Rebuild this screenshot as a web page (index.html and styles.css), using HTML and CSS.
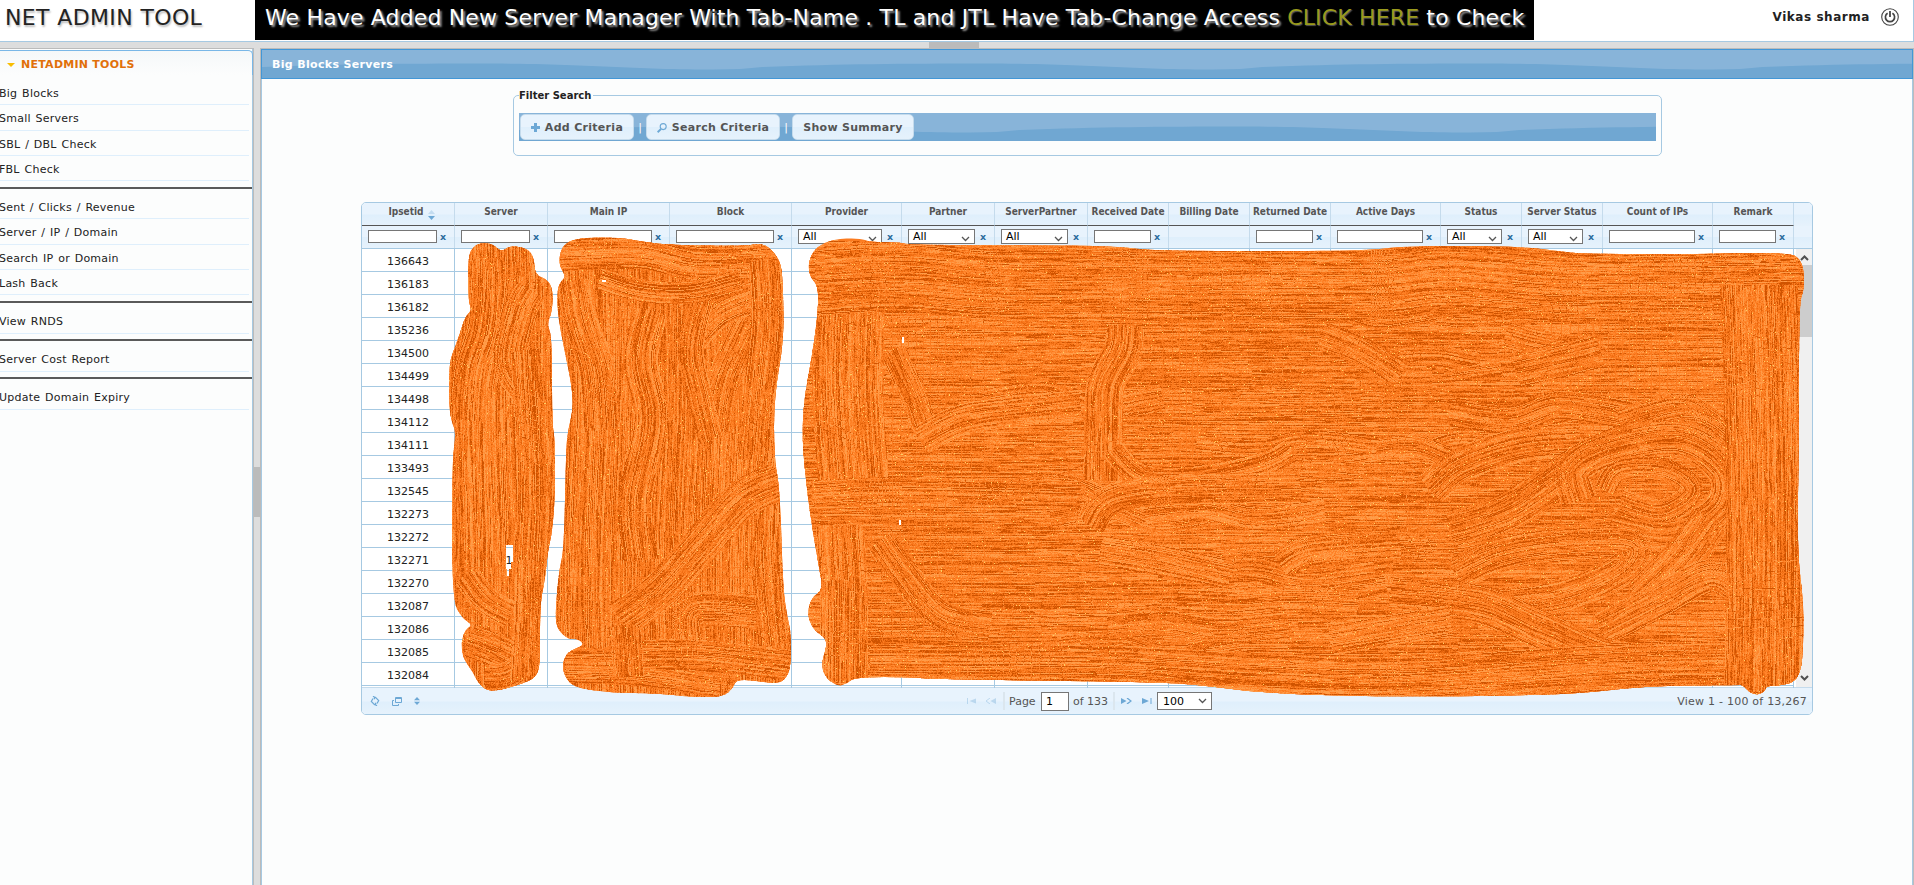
FILE: index.html
```html
<!DOCTYPE html>
<html lang="en">
<head>
<meta charset="utf-8">
<title>Net Admin Tool</title>
<link rel="stylesheet" href="styles.css">
</head>
<body>
<header class="top">
  <h1 class="brand">NET ADMIN TOOL</h1>
  <div class="notice"><span class="notice-text">We Have Added New Server Manager With Tab-Name . TL and JTL Have Tab-Change Access <a class="here">CLICK HERE</a> to Check</span></div>
  <div class="user"><span class="user-name">Vikas sharma</span>
    <svg class="power" width="18" height="18" viewBox="0 0 18 18" fill="none" stroke="#444"><circle cx="9" cy="9" r="8.3" stroke-width="1.1"/><path d="M6.6 5.2a4.6 4.6 0 1 0 4.8 0" stroke-width="1.7"/><path d="M9 3v6" stroke-width="1.8"/></svg>
  </div>
</header>
<div class="bar-h"><div class="grip-h"></div></div>
<div class="body">
  <nav class="side">
    <div class="side-head"><span class="tri"></span><span>NETADMIN TOOLS</span></div>
    <div class="menu" id="menu"></div>
  </nav>
  <div class="bar-v"><div class="grip-v"></div></div>
  <main class="main">
    <div class="title"><svg class="wave" width="100%" height="100%"><defs><pattern id="w" width="500" height="28" patternUnits="userSpaceOnUse"><path d="M0 17C80 14 140 13.500 220 13.500C330 13.500 360 19.500 450 19.500Q480 19.500 500 17V28H0Z" fill="#70a7d2"/></pattern></defs><rect width="100%" height="100%" fill="url(#w)"/></svg><span class="title-text">Big Blocks Servers</span></div>
    <fieldset class="filter">
      <legend>Filter Search</legend>
      <div class="tools">
        <svg class="wave" width="100%" height="100%"><rect width="100%" height="100%" fill="url(#w)"/></svg>
        <button class="btn add"><svg width="9" height="9" viewBox="0 0 9 9"><path d="M3 0h3v3h3v3H6v3H3V6H0V3h3z" fill="#6da8d5"/></svg><span>Add Criteria</span></button>
        <span class="sep">|</span>
        <button class="btn find"><svg width="10" height="10" viewBox="0 0 10 10" fill="none" stroke="#6da8d5"><circle cx="6.200" cy="3.600" r="3" stroke-width="1.100"/><path d="M4 6L.6 9.200" stroke-width="1.900"/></svg><span>Search Criteria</span></button>
        <span class="sep">|</span>
        <button class="btn sum"><span>Show Summary</span></button>
      </div>
    </fieldset>
    <section class="grid">
      <div class="grid-head" id="head"></div>
      <div class="grid-filter" id="filters"></div>
      <div class="grid-body">
        <div class="rows" id="rows"></div>
        <div class="scroll">
          <svg class="arrow" width="9" height="6" viewBox="0 0 9 6"><path d="M1 5l3.500-3.500L8 5" fill="none" stroke="#505050" stroke-width="2"/></svg>
          <div class="thumb"></div>
          <svg class="arrow down" width="9" height="6" viewBox="0 0 9 6"><path d="M1 1l3.500 3.500L8 1" fill="none" stroke="#505050" stroke-width="2"/></svg>
        </div>
      </div>
      <footer class="pager">
        <div class="acts">
          <svg width="10" height="10" viewBox="0 0 10 10" fill="none" stroke="#6da8d5" stroke-width="1.200"><path d="M4 1.300H5.500L8.700 4.500 7 7.500M6 8.700H4.500L1.300 5.500 3 2.500M3 .2L5 1.500 4 3.200M7 9.800L5 8.500 6 6.800"/></svg>
          <svg width="10" height="9" viewBox="0 0 10 9" fill="none" stroke="#6da8d5"><path d="M3.500 .5h6v5h-6zM3.500 1.500h6M2 3.500H.5v5h6V7"/></svg>
          <svg width="6" height="8" viewBox="0 0 6 8" fill="#6da8d5"><path d="M3 0l3 3.200H0zM3 8l3-3.200H0z"/></svg>
        </div>
        <div class="nav">
          <svg class="off" width="10" height="6" viewBox="0 0 10 6" fill="#6da8d5"><path d="M0 0h1v6H0zM9 .5v5L2.500 3z"/></svg>
          <svg class="off prev" width="11" height="6" viewBox="0 0 11 6" fill="#6da8d5"><path d="M11 0v6L5.500 3z"/><path d="M5 0L1 3l4 3" fill="none" stroke="#6da8d5"/></svg>
          <i class="div"></i><span class="pg">Page</span><span class="pbox">1</span><span class="of">of 133</span><i class="div"></i>
          <svg class="next" width="11" height="6" viewBox="0 0 11 6" fill="#6da8d5"><path d="M0 0v6l5.500-3z"/><path d="M6 0l4 3-4 3" fill="none" stroke="#6da8d5" stroke-width="1.300"/></svg>
          <svg class="last" width="10" height="6" viewBox="0 0 10 6" fill="#6da8d5"><path d="M8.500 0h1v6h-1zM0 0v6l7-3z"/></svg>
          <span class="sel size">100<svg width="9" height="6" viewBox="0 0 9 6"><path d="M1 1l3.500 3.500L8 1" fill="none" stroke="#555" stroke-width="1.300"/></svg></span>
        </div>
        <div class="view">View 1 - 100 of 13,267</div>
      </footer>
    </section>
  </main>
</div>
<canvas class="paint" id="paint" width="1372" height="470"></canvas>
<script src="app.js"></script>
</body>
</html>
```
FILE: styles.css
```css
* { box-sizing: border-box; }
body { margin: 0; width: 1914px; height: 885px; overflow: hidden; background: #ddd; color: #222; font-family: Verdana, "DejaVu Sans", sans-serif; font-size: 11px; position: relative; }
.top { height: 42px; background: #fff; border-bottom: 1px solid #a6c9e2; border-right: 1px solid #a6c9e2; display: flex; }
.brand { margin: 0; width: 255px; padding: 2px 0 0 5px; font-size: 22px; font-weight: 400; line-height: 32px; letter-spacing: .37px; white-space: nowrap; text-shadow: 1px 2px 2px #bbb; }
.notice { width: 1279px; height: 40px; background: #000; color: #fff; padding: 2px 0 0 10px; font-size: 22px; line-height: 32px; letter-spacing: .15px; white-space: nowrap; text-shadow: 2px 2px 2px #999; }
.here { color: #9a9a1c; text-shadow: 1px 1px 1px #555; }
.user { flex: 1; display: flex; align-items: center; justify-content: flex-end; height: 33px; padding-right: 14px; gap: 11px; }
.user-name { font-weight: 700; font-size: 12px; letter-spacing: .55px; }
.bar-h { height: 6px; display: flex; justify-content: center; }
.grip-h { width: 50px; margin-right: 6px; background: #bbb; }
.body { display: flex; height: 837px; }
.side { width: 254px; background: #fcfdfd; border-top: 1px solid #bbb; border-right: 1px solid #bbb; padding: 1px 0 0; box-shadow: inset -1px 0 #a6c9e2; }
.side-head { height: 25px; width: 253px; border-top: 1px solid #79b7e7; border-right: 1px solid #79b7e7; border-top-right-radius: 5px; background: linear-gradient(#f5f8f9, #fcfdfd); display: flex; align-items: center; gap: 6px; padding: 3px 0 0 7px; color: #e17009; font-weight: 700; font-size: 11px; letter-spacing: .25px; }
.tri { border: 4px solid transparent; border-top-color: #f9bd01; border-bottom: 0; }
.menu { padding-top: 5px; }
.menu-item { height: 25.33px; width: 249px; border-bottom: 1px solid #dfeffc; text-indent: -1px; padding-top: 5px; white-space: nowrap; line-height: 17px; letter-spacing: .25px; word-spacing: 1px; }
.menu-rule { height: 2px; width: 252px; margin: 5.500px 0 5.300px; background: #5a5a5a; }
.bar-v { width: 6px; display: flex; align-items: center; }
.grip-v { width: 6px; height: 50px; background: #bbb; margin-top: 51px; }
.main { width: 1654px; background: #fcfdfd; border: 1px solid #bbb; border-bottom: 0; box-shadow: inset 1px 0 #a6c9e2, inset -1px 0 #a6c9e2; }
.title { height: 30px; background: #88b4d9; border: 1px solid #4297d7; position: relative; color: #fff; font-weight: 700; font-size: 11px; line-height: 29px; padding-left: 10px; letter-spacing: .33px; }
.wave { position: absolute; left: 0; top: 0; }
.title-text { position: relative; }
.filter { width: 1149px; height: 67px; margin: 10px 0 0 252px; padding: 0 5px; border: 1px solid #a6c9e2; border-radius: 5px; background: #fcfdfd; }
.filter legend { font-size: 10px; font-weight: 700; line-height: 13px; padding: 0 2px 0 0; }
.tools { height: 28px; margin-top: 11px; position: relative; background: #88b4d9; display: flex; align-items: center; padding-left: 1px; color: #fff; }
.btn { position: relative; height: 26px; border: 1px solid #c5dbec; border-radius: 5px; background: linear-gradient(#e8f3fd 50%, #dfeffc 50%, #e6f2fc); color: #555; font: 700 11px Verdana, "DejaVu Sans", sans-serif; letter-spacing: .3px; display: flex; align-items: center; justify-content: center; gap: 5px; padding: 1px 0 0; white-space: nowrap; }
.add { width: 114px; }
.find { width: 134px; }
.sum { width: 122px; }
.sep { width: 12px; text-align: center; position: relative; }
.grid { width: 1452px; height: 513px; margin: 46px 0 0 100px; border: 1px solid #a6c9e2; border-radius: 5px; overflow: hidden; background: #fff; }
.grid-head, .grid-filter { display: flex; background: linear-gradient(#e8f3fd 48%, #dfeffc 52%, #e6f2fc); }
.grid-head { height: 23px; font-family: "DejaVu Sans Condensed", "DejaVu Sans", sans-serif; font-stretch: condensed; color: #555; font-weight: 700; }
.th { border-right: 1px solid #c5dbec; border-bottom: 1px solid #555; text-align: center; line-height: 17px; font-size: 10px; white-space: nowrap; flex: none; position: relative; }
.th:first-child { padding-left: 7px; }
.sort { margin-left: 4px; vertical-align: -5px; }
.grid-filter { height: 23px; border-bottom: 1px solid #a6c9e2; }
.tf { border-right: 1px solid #c5dbec; padding: 4px 0 0 6px; flex: none; display: flex; align-items: flex-start; }
.inp { height: 13px; border: 1px solid #767676; background: #fff; flex: none; }
.sel { height: 15px; margin-top: -1px; border: 1px solid #767676; background: #fff; color: #000; flex: none; font-size: 11px; line-height: 13px; padding: 0 4px; display: flex; justify-content: space-between; align-items: center; }
.tf .sel svg { margin-top: 5px; }
.clr { color: #2e6e9e; font-weight: 700; font-size: 9.500px; line-height: 13px; margin-left: 3px; }
.sel + .clr { margin-left: 5px; }
.grid-body { display: flex; height: 439px; border-bottom: 1px solid #c5dbec; }
.rows { width: 1434px; overflow: hidden; height: 439px; flex: none; }
.row { display: flex; height: 23px; }
.td { border-right: 1px solid #a6c9e2; border-bottom: 1px solid #a6c9e2; flex: none; text-align: center; line-height: 25px; }
.scroll { width: 16px; background: #f0f0f0; display: flex; flex-direction: column; align-items: center; padding: 6px 0; }
.thumb { width: 15px; height: 72px; background: #cdcdcd; margin-top: 4px; }
.arrow.down { margin-top: auto; }
.pager { height: 26px; background: linear-gradient(#e8f3fd 50%, #dfeffc 54%, #e6f2fc); display: grid; grid-template-columns: 605px 1fr 300px; align-items: center; color: #555; }
.acts { display: flex; gap: 12px; padding-left: 8px; align-items: center; }
.nav { display: flex; align-items: center; }
.off { opacity: .35; }
.prev { margin-left: 8px; }
.div { width: 2px; height: 18px; background: #dbe6ee; margin: 0 4px 0 7px; }
.of + .div { margin: 0 6px 0 3px; }
.pg { width: 32px; }
.pbox { width: 28px; height: 19px; border: 1px solid #767676; background: #fff; color: #000; line-height: 17px; padding-left: 4px; }
.of { width: 37px; margin-left: 4px; white-space: nowrap; }
.last { margin: 0 5px 0 10px; }
.size { width: 55px; height: 18px; margin: 0; padding: 0 4px 0 5px; }
.view { text-align: right; padding-right: 5px; letter-spacing: .23px; }
.paint { position: absolute; left: 440px; top: 232px; pointer-events: none; }
```
FILE: app.js
```js
const $ = id => document.getElementById(id);

const groups = [
  ['Big Blocks', 'Small Servers', 'SBL / DBL Check', 'FBL Check'],
  ['Sent / Clicks / Revenue', 'Server / IP / Domain', 'Search IP or Domain', 'Lash Back'],
  ['View RNDS'], ['Server Cost Report'], ['Update Domain Expiry']
];
$('menu').innerHTML = groups
  .map(g => g.map(t => `<div class="menu-item">${t}</div>`).join(''))
  .join('<div class="menu-rule"></div>');

const cols = [
  ['Ipsetid', 93, 'i'], ['Server', 93, 'i'], ['Main IP', 122, 'i'], ['Block', 122, 'i'],
  ['Provider', 110, 's'], ['Partner', 93, 's'], ['ServerPartner', 93, 's'],
  ['Received Date', 81, 'i'], ['Billing Date', 81, ''], ['Returned Date', 81, 'i'],
  ['Active Days', 110, 'i'], ['Status', 81, 's'], ['Server Status', 81, 's'],
  ['Count of IPs', 110, 'i'], ['Remark', 81, 'i']
];
const sort = '<svg class="sort" width="7" height="10" viewBox="0 0 7 10"><path d="M0 4l3.500-4L7 4z" fill="#c3dcf0"/><path d="M0 6h7l-3.500 4z" fill="#6da8d5"/></svg>';
$('head').innerHTML = cols.map((c, i) => `<div class="th" style="width:${c[1]}px">${c[0]}${i ? '' : sort}</div>`).join('');
const chev = '<svg width="9" height="6" viewBox="0 0 9 6"><path d="M1 1l3.500 3.500L8 1" fill="none" stroke="#555" stroke-width="1.300"/></svg>';
$('filters').innerHTML = cols.map(c => {
  const box = c[2] === 'i' ? `<span class="inp" style="width:${c[1] - 24}px"></span>`
    : c[2] === 's' ? `<span class="sel" style="width:${c[1] - 26}px">All${chev}</span>` : '';
  return `<div class="tf" style="width:${c[1]}px">${box}${box ? '<span class="clr">x</span>' : ''}</div>`;
}).join('');

const ids = [136643, 136183, 136182, 135236, 134500, 134499, 134498, 134112, 134111, 133493,
  132545, 132273, 132272, 132271, 132270, 132087, 132086, 132085, 132084, ''];
$('rows').innerHTML = ids.map(id => '<div class="row">' + cols.map((c, i) =>
  `<div class="td" style="width:${c[1]}px${i === 1 && id === 132271 ? ';padding-left:16px' : ''}">${i === 0 ? id : i === 1 && id === 132271 ? '1' : ''}</div>`
).join('') + '</div>').join('');

/* Paint strokes over the private columns */
const cv = $('paint'), g = cv.getContext('2d');
g.translate(-440, -232);
let seed = 7;
const rnd = () => (seed = (seed * 16807) % 2147483647) / 2147483647;

const blobs = [
  [468,255,475,245,483,243,493,244,501,252,508,247,515,246,528,249,534,258,535,275,547,279,553,290,552,312,547,324,552,337,552,423,555,440,555,497,552,533,548,550,545,580,540,603,540,663,537,675,528,682,490,693,478,683,473,672,463,658,461,643,465,630,473,625,462,618,452,600,452,463,456,432,452,423,449,407,449,363,455,347,460,333,465,317,472,310,468,300],
  [559,258,563,245,577,238,617,237,638,241,668,245,748,246,760,243,770,248,781,262,783,288,784,340,774,397,774,457,780,490,783,590,788,620,791,633,791,667,785,680,775,684,737,678,733,688,723,697,692,697,655,693,615,693,575,688,565,677,562,665,567,652,585,645,578,639,568,639,558,630,555,617,559,570,564,550,566,450,568,430,573,410,572,387,565,353,558,317,557,293,560,282,566,277,560,267],
  [808,263,815,248,833,239,860,238,870,242,898,242,910,245,1063,245,1123,247,1137,249,1173,251,1370,251,1399,246,1518,246,1566,252,1586,254,1710,254,1724,253,1790,253,1800,259,1804,271,1804,290,1799,303,1799,440,1797,550,1804,607,1803,650,1801,670,1794,683,1774,686,1767,686,1764,692,1757,695,1749,692,1743,685,1738,685,1643,686,1570,695,1382,697,1262,693,1202,685,1155,682,927,679,914,677,854,677,847,684,837,686,825,677,821,663,829,640,813,630,807,613,812,597,823,590,819,567,812,527,807,490,802,440,804,400,810,367,817,323,819,287,810,277]
];
const outline = new Path2D();
for (const b of blobs) {
  const n = b.length / 2, p = i => [b[(i % n) * 2], b[(i % n) * 2 + 1]];
  const mid = i => { const a = p(i), c = p(i + 1); return [(a[0] + c[0]) / 2, (a[1] + c[1]) / 2]; };
  outline.moveTo(...mid(0));
  for (let i = 1; i <= n; i++) outline.quadraticCurveTo(...p(i), ...mid(i));
  outline.closePath();
}
g.save();
g.clip(outline);
g.fillStyle = '#fb7b20';
g.fillRect(440, 232, 1372, 470);

const shades = ['#ff9c48', '#ff8e38', '#ff862c', '#fe7f24', '#f8781c', '#f06d13', '#e2620a', '#cf5300'];
function brush(w, pts) {
  const s = [], n = pts.length / 2, q = i => { i = Math.max(0, Math.min(n - 1, i)); return [pts[i * 2], pts[i * 2 + 1]]; };
  for (let i = 0; i < n - 1; i++) {
    const a = q(i - 1), b = q(i), c = q(i + 1), d = q(i + 2);
    const len = Math.ceil(Math.hypot(c[0] - b[0], c[1] - b[1]));
    for (let k = 0; k < len; k++) {
      const t = k / len, h = j => .5 * (2 * b[j] + (c[j] - a[j]) * t + (2 * a[j] - 5 * b[j] + 4 * c[j] - d[j]) * t * t + (3 * b[j] - a[j] - 3 * c[j] + d[j]) * t * t * t);
      s.push([h(0), h(1)]);
    }
  }
  for (let o = -w / 2; o < w / 2; o += .9) {
    const reach = Math.sqrt(Math.max(0, w * w / 4 - o * o)) - w / 2;
    let tone = rnd() * 6.5, left = 0, v = tone;
    for (let i = Math.max(0, Math.floor(-reach * .5)); i < s.length; i++) {
      if (left-- <= 0) { left = 2 + rnd() * 16; v = tone + (rnd() - .5) * 4.5; if (rnd() < .08) tone = rnd() * 6.5; }
      const a = s[Math.max(0, i - 3)], c = s[Math.min(s.length - 1, i + 3)];
      const dx = c[0] - a[0], dy = c[1] - a[1], l = Math.hypot(dx, dy) || 1;
      const k = Math.max(0, Math.min(7, Math.round(v + (rnd() - .5) * 4)));
      g.fillStyle = rnd() < .006 ? '#ffcf62' : shades[k];
      g.fillRect(Math.round(s[i][0] - dy / l * o), Math.round(s[i][1] + dx / l * o), 1, 1);
    }
  }
}
/* server column */
for (let x = 455; x < 560; x += 18) brush(24, [x, 238, x - 2, 400, x + 2, 560, x, 700]);
brush(34, [485,258,486,290,482,330,470,370,466,420]);
brush(30, [520,262,518,300,508,345,500,390]);
brush(34, [530,290,520,310,510,360,525,390]);
brush(30, [525,350,532,480,528,580,524,675]);
brush(28, [465,575,485,600,510,615]);
brush(34, [468,640,495,650,520,662]);
brush(30, [485,680,510,676,535,655]);
brush(26, [528,560,526,620,522,680]);
/* address columns */
for (let x = 560; x < 800; x += 20) brush(26, [x, 238, x + 3, 400, x - 3, 560, x, 700]);
brush(36, [573,280,580,320,595,370,600,430]);
brush(34, [765,290,740,340,722,385,715,430]);
brush(32, [690,340,720,310,775,290]);
brush(34, [650,310,640,360,650,420,635,500,640,560]);
brush(26, [700,300,690,350,700,400,710,440]);
brush(34, [560,254,640,252,700,264,790,260]);
brush(22, [600,278,640,290,690,292,740,280]);
brush(36, [765,260,768,320,760,400,755,460]);
brush(38, [780,480,740,500,700,545,660,590,620,620]);
brush(34, [690,640,695,610,760,612]);
brush(30, [765,540,768,590,775,660]);
brush(36, [565,665,640,668,720,680,740,680]);
brush(30, [640,655,700,655,790,665]);
brush(30, [625,625,628,676]);
/* data columns */
for (let y = 250; y < 705; y += 15) brush(20, [800, y, 1000, y + 2, 1200, y - 1, 1500, y + 1, 1810, y]);
for (let i = 0; i < 34; i++) {
  const x = 900 + rnd() * 680, y = 300 + rnd() * 350, d = rnd() * 16 - 8;
  brush(12 + rnd() * 18, [x, y, x + 60, y + d, x + 110, y - d, x + 180, y + d / 2]);
}
for (const x of [830, 850, 872]) brush(28, [x, 275, x - 4, 380, x + 2, 480]);
for (const x of [828, 850]) brush(26, [x, 525, x + 4, 600, x + 4, 680]);
brush(26, [892,350,912,395,925,430]);
brush(30, [880,540,905,575,940,615,990,625]);
brush(30, [920,440,960,420,1010,412,1080,405]);
brush(38, [1125,325,1122,350,1105,385,1103,430,1102,480]);
brush(24, [1112,450,1140,475,1190,478,1260,465,1290,450]);
brush(30, [1090,525,1110,500,1170,490,1300,487]);
brush(30, [1100,550,1160,560,1230,575]);
brush(28, [1320,335,1360,350,1400,375]);
brush(28, [1505,335,1545,345,1590,350]);
brush(34, [1515,370,1560,360,1600,350]);
brush(34, [1620,425,1680,410,1715,430]);
brush(34, [1430,490,1460,465,1520,445,1580,440]);
brush(38, [1450,530,1510,510,1570,470,1620,445,1690,425,1730,450]);
brush(38, [1580,500,1575,470,1610,450,1680,440,1725,470,1720,510,1670,535,1610,525]);
brush(24, [1605,490,1620,470,1665,470,1690,490,1660,510,1620,500]);
brush(30, [1280,565,1310,550,1400,543]);
brush(34, [1455,575,1500,555,1560,545,1630,545,1620,570,1560,595,1480,605]);
brush(40, [1640,600,1680,560,1710,520]);
brush(34, [1600,630,1660,600,1710,575,1740,590]);
brush(38, [1390,595,1480,605,1540,630,1620,660,1740,665]);
brush(30, [1330,640,1390,630,1450,620]);
for (let y = 654; y < 700; y += 18) brush(22, [870, y, 1100, y + 1, 1260, y + 10, 1400, y + 13, 1620, y, 1800, y - 4]);
for (let y = 255; y < 318; y += 13) brush(17, [815, y, 900, y - 4, 1000, y + 3, 1150, y + 3, 1370, y + 4, 1450, y - 2, 1580, y + 6, 1780, y + 4]);
for (const x of [1738, 1762, 1787]) brush(28, [x - 4, 285, x, 400, x + 2, 550, x, 692]);
brush(22, [838,580,837,682]);
brush(26, [812,494,900,490,1080,494]);
g.restore();

/* gaps the brush missed */
g.clearRect(506, 545, 7, 17);
g.clearRect(506, 562, 5, 7);
g.clearRect(507, 569, 2, 7);
g.fillStyle = '#fff';
g.fillRect(902, 337, 2, 6);
g.fillRect(899, 520, 2, 5);
g.fillRect(602, 280, 4, 2);
```
